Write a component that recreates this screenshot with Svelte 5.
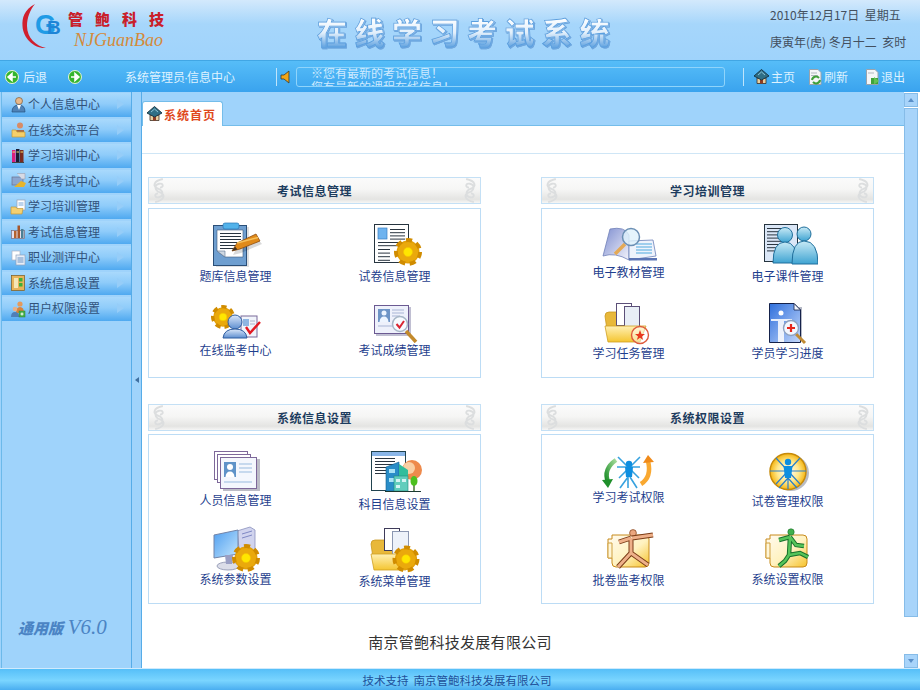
<script lang="ts">
  const menu = [
    { label: '个人信息中心', icon: 'm1' },
    { label: '在线交流平台', icon: 'm2' },
    { label: '学习培训中心', icon: 'm3' },
    { label: '在线考试中心', icon: 'm4' },
    { label: '学习培训管理', icon: 'm5' },
    { label: '考试信息管理', icon: 'm6' },
    { label: '职业测评中心', icon: 'm7' },
    { label: '系统信息设置', icon: 'm8' },
    { label: '用户权限设置', icon: 'm9' }
  ];

  // h = height of the icon slot, so each label lands where the artwork pushes it
  const panels = [
    {
      title: '考试信息管理',
      items: [
        { label: '题库信息管理', icon: 'tiku', h: 48 },
        { label: '试卷信息管理', icon: 'shijuan', h: 48 },
        { label: '在线监考中心', icon: 'jiankao', h: 44 },
        { label: '考试成绩管理', icon: 'chengji', h: 44 }
      ]
    },
    {
      title: '学习培训管理',
      items: [
        { label: '电子教材管理', icon: 'jiaocai', h: 44 },
        { label: '电子课件管理', icon: 'kejian', h: 48 },
        { label: '学习任务管理', icon: 'renwu', h: 47 },
        { label: '学员学习进度', icon: 'jindu', h: 47 }
      ]
    },
    {
      title: '系统信息设置',
      items: [
        { label: '人员信息管理', icon: 'renyuan', h: 46 },
        { label: '科目信息设置', icon: 'kemu', h: 50 },
        { label: '系统参数设置', icon: 'canshu', h: 47 },
        { label: '系统菜单管理', icon: 'caidan', h: 49 }
      ]
    },
    {
      title: '系统权限设置',
      items: [
        { label: '学习考试权限', icon: 'xuexi', h: 43 },
        { label: '试卷管理权限', icon: 'juanquan', h: 47 },
        { label: '批卷监考权限', icon: 'pijuan', h: 48 },
        { label: '系统设置权限', icon: 'shezhi', h: 47 }
      ]
    }
  ];
</script>

{#snippet gear(x, y, r)}
  <circle cx={x} cy={y} r={r * 0.82} fill="#e3a008" stroke="#d08c00" stroke-width={r * 0.36} stroke-dasharray={`${r * 0.42} ${r * 0.32}`} />
  <circle cx={x} cy={y} r={r * 0.72} fill="#eaa90c" />
  <circle cx={x} cy={y} r={r * 0.32} fill="#ffe600" stroke="#f5c400" stroke-width="0.6" />
{/snippet}

{#snippet lines(x, y, w, n, step, color = '#2a3540')}
  {#each Array(n) as _, i}
    <path d={`M${x} ${y + i * step + 0.5}H${x + w}`} stroke={color} stroke-width="1" />
  {/each}
{/snippet}

{#snippet folder(x, y)}
  <path d={`M${x} ${y + 28}L${x - 3} ${y + 7}Q${x - 3} ${y + 3} ${x + 1} ${y + 3}H${x + 10}L${x + 14} ${y + 7}H${x + 30}V${y + 30}H${x + 4}Z`} fill="#e8b83a" stroke="#c99820" stroke-width="0.8" />
{/snippet}

{#snippet folderFront(x, y)}
  <path d={`M${x + 2} ${y + 31}L${x - 1} ${y + 15}H${x + 40}L${x + 34} ${y + 31}Z`} fill="url(#gFolder)" stroke="#cf9f22" stroke-width="0.8" />
{/snippet}

{#snippet clipFolder(x)}
  <path d={`M${x} 14H${x + 4}V10H${x + 37}Q${x + 41} 10 ${x + 41} 14V38Q${x + 41} 42 ${x + 37} 42H${x + 8}Q${x + 4} 42 ${x + 4} 38V33H${x}Z`} fill="url(#gClip)" stroke="#c78a1a" />
  <path d={`M${x} 18H${x + 4}V33H${x}Z`} fill="#fff6d8" stroke="#cfa040" />
{/snippet}

{#snippet art(name)}
  {#if name === 'tiku'}
    <rect x="10" y="6" width="33" height="40" fill="#000" opacity=".12" />
    <rect x="7.500" y="4.500" width="33" height="40" fill="#6f9fd0" stroke="#2b4f78" />
    <path d="M11 9H37V36H19L11 30Z" fill="#fff" stroke="#3d5b7e" stroke-width=".6" />
    {@render lines(14, 12, 21, 6, 3)}
    <path d="M11 30L19 36L19 30Z" fill="#cfd8e2" stroke="#5b7290" stroke-width=".6" />
    <rect x="17" y="2" width="16" height="6" rx="2" fill="#52b2ea" stroke="#2a77b4" stroke-width=".7" />
    <path d="M26 31L30 23L50 14L55 20L34 29Z" fill="#000" opacity=".15" transform="translate(1 3)" />
    <path d="M26 30L31 22L50 13L54 20L34 28Z" fill="#e08a1a" stroke="#8e4d0e" stroke-width=".8" />
    <path d="M31 22L52 16.500" stroke="#f6c15a" stroke-width="1.400" />
    <path d="M26 30L29 25.500L31.500 28.600Z" fill="#45321f" />
  {:else if name === 'shijuan'}
    <rect x="9.500" y="3.500" width="34" height="38" fill="#fff" stroke="#26343f" />
    <rect x="13" y="7" width="9" height="11" fill="#6eb3ef" stroke="#3a7fc4" stroke-width=".7" />
    {@render lines(25, 8, 15, 4, 3.200)}
    {@render lines(13, 21, 27, 2, 3.200)}
    {@render lines(13, 28, 12, 4, 3.600)}
    {@render gear(43, 31, 14)}
  {:else if name === 'jiankao'}
    {@render gear(17, 18, 12)}
    <rect x="35" y="17" width="16" height="21" fill="#f1f4fb" stroke="#7a6a9a" />
    <rect x="37" y="20" width="6" height="7" fill="#8fb6e2" />
    <path d="M44 22H49M44 25H49" stroke="#aab6cc" />
    <circle cx="29" cy="23" r="7" fill="url(#gBlue)" stroke="#2f5da0" />
    <path d="M17 39Q18 30 29 30Q40 30 41 39Z" fill="url(#gBlue)" stroke="#2f5da0" />
    <path d="M40 28L44 34L54 23" fill="none" stroke="#e31b23" stroke-width="2.400" />
  {:else if name === 'chengji'}
    <rect x="11" y="8" width="35" height="29" fill="#c0bfd2" />
    <rect x="9.500" y="6.500" width="34" height="28" fill="#eef1fb" stroke="#6b5a92" />
    <rect x="13" y="10" width="12" height="13" fill="#6e94c6" />
    <circle cx="19" cy="14" r="2.500" fill="#eef5ff" />
    <path d="M14.500 23Q15 17.500 19 17.500Q23 17.500 23.500 23Z" fill="#eef5ff" />
    <path d="M27 11H39M27 14H39M27 17H35M13 27H32" stroke="#a9b5d5" />
    <path d="M41 32L51 43" stroke="#c38a2c" stroke-width="3.500" />
    <circle cx="35" cy="25" r="7.500" fill="#f7fbff" stroke="#a7b7c7" stroke-width="1.500" />
    <path d="M31.500 25L34.500 28.500L39 22" fill="none" stroke="#d92632" stroke-width="2" />
  {:else if name === 'jiaocai'}
    <path d="M4 35L11 8Q26 5 30 14L30 39Q16 31 4 35Z" fill="url(#gBook)" stroke="#7080b8" stroke-width=".8" />
    <path d="M30 39L30 20L54 19L57 35Z" fill="#eef3fc" stroke="#6b80b8" stroke-width=".8" />
    <path d="M30 37H58V39.500H30Z" fill="#5b74b4" />
    <path d="M37 23H53M37 26H53M37 29H53M37 32H53" stroke="#4fa9de" />
    <path d="M16 33L26 23" stroke="#e4a956" stroke-width="3.500" />
    <circle cx="32" cy="16" r="8.500" fill="#dff1fb" fill-opacity=".8" stroke="#6b8fb4" stroke-width="1.500" />
  {:else if name === 'kejian'}
    <rect x="6.500" y="3.500" width="33" height="37" fill="#dbe7f7" stroke="#26343f" />
    {@render lines(9, 7, 17, 8, 3.200)}
    <circle cx="27" cy="14" r="7.500" fill="url(#gAqua)" stroke="#206f9c" />
    <path d="M15 42Q15 21 27 21Q39 21 39 42Z" fill="url(#gAqua)" stroke="#206f9c" />
    <circle cx="46" cy="13" r="7" fill="url(#gAqua)" stroke="#206f9c" />
    <path d="M34 43Q34 20 46 20Q60 20 60 43Z" fill="url(#gAqua)" stroke="#206f9c" />
  {:else if name === 'renwu'}
    {@render folder(9, 10)}
    <rect x="17.500" y="4.500" width="15" height="22" fill="#fff" stroke="#5b4f78" />
    <rect x="25.500" y="7.500" width="15" height="24" fill="#e8eef6" stroke="#5b4f78" />
    {@render folderFront(7, 12)}
    <circle cx="41" cy="36" r="8.500" fill="#fff" fill-opacity=".5" stroke="#de5b3c" stroke-width="1.400" />
    <path d="M41 31L42.500 35H46L43 37.500L44.200 41L41 38.800L37.800 41L39 37.500L36 35H39.500Z" fill="#e8391e" />
  {:else if name === 'jindu'}
    <path d="M41 8V42H44V8Z" fill="#b6bac6" />
    <path d="M11.500 4.500H36L42.500 11V43.500H11.500Z" fill="url(#gDoc)" stroke="#15224a" />
    <path d="M36 4.500V11H42.500Z" fill="#f4f7fd" stroke="#15224a" stroke-width=".8" />
    <circle cx="23" cy="14" r="2.500" fill="#fff" />
    <path d="M13 20H34V22H26V43H20V22H13Z" fill="#fff" fill-opacity=".85" />
    <path d="M38 35L47 44" stroke="#c18b34" stroke-width="3" />
    <circle cx="33" cy="29" r="7.500" fill="#f2f7ff" stroke="#8ea2c0" stroke-width="1.400" />
    <path d="M33 25V33M29 29H37" stroke="#e5261c" stroke-width="2.200" />
  {:else if name === 'renyuan'}
    <rect x="8.500" y="4.500" width="33" height="28" fill="#fff" stroke="#7e689a" />
    <rect x="11.500" y="7.500" width="33" height="28" fill="#fff" stroke="#7e689a" />
    <rect x="17" y="12" width="37" height="32" fill="#bcbcc6" />
    <rect x="14.500" y="10.500" width="36" height="31" fill="#f4f7fd" stroke="#7e689a" />
    <rect x="18" y="15" width="12" height="15" fill="#5f93c8" />
    <circle cx="24" cy="20" r="3" fill="#fff" />
    <path d="M19.500 30Q20 24.500 24 24.500Q28 24.500 28.500 30Z" fill="#fff" />
    <path d="M33 17H46M33 21H46M33 25H46M18 35H46" stroke="#99bbdf" />
  {:else if name === 'kemu'}
    <rect x="6.500" y="4.500" width="34" height="39" fill="#fff" stroke="#21434f" />
    <rect x="7" y="5" width="33" height="4" fill="#8ab6e8" />
    {@render lines(10, 11, 20, 6, 3)}
    <circle cx="47" cy="23" r="10" fill="#ee8a4c" />
    <circle cx="44" cy="21" r="6" fill="#f9cfa4" />
    <path d="M21 44V20L34 15V44Z" fill="#2a8dc8" stroke="#125e8d" stroke-width=".6" />
    <path d="M24 22H30V26H24ZM24 31H30V35H24Z" fill="#a8e2f6" />
    <path d="M34 44V17L43 23V44Z" fill="#31bd9c" />
    <rect x="29" y="29" width="14" height="15" fill="#62cdbd" stroke="#208a7d" stroke-width=".6" />
    <path d="M31 32H35V35H31ZM37 32H41V35H37ZM31 38H35V41H31Z" fill="#d6f4f3" />
    <path d="M49 44V36" stroke="#3d6b2a" stroke-width="1.400" />
    <ellipse cx="49" cy="34" rx="3.500" ry="5" fill="#4cc01f" />
    <path d="M20 44.500H56" stroke="#1b3a33" />
  {:else if name === 'canshu'}
    <path d="M31 6L44 2L49 5V28L34 32Z" fill="#d1d4ee" stroke="#8a90bc" stroke-width=".8" />
    <path d="M36 9L46 6M36 13L46 10" stroke="#7f88c4" />
    <path d="M8 10L32 5V29L8 33Z" fill="url(#gScreen)" stroke="#7384a8" />
    <ellipse cx="22" cy="41" rx="11" ry="4" fill="#dbdde8" stroke="#9ca2bb" />
    <path d="M19 30H27L26 39H20Z" fill="#9a9fc4" />
    {@render gear(40, 33, 14)}
  {:else if name === 'caidan'}
    {@render folder(9, 12)}
    <rect x="19.500" y="3.500" width="15" height="22" fill="#fff" stroke="#3e3b5a" />
    <rect x="27.500" y="6.500" width="16" height="24" fill="#edf2fa" stroke="#8b97b2" />
    {@render folderFront(7, 14)}
    {@render gear(41, 34, 13.500)}
  {:else if name === 'xuexi'}
    <g stroke="#37a2df" stroke-width="1.600" fill="none">
      <path d="M19 10L40 31M41 10L20 31M29 19V41M29 30L21 41M31 30L38 41M18 20H41" />
    </g>
    <circle cx="30" cy="17" r="3.200" fill="#0d8ee0" />
    <path d="M26 20H34L33 30H27Z" fill="#0d8ee0" />
    <path d="M17 13Q4 22 9 35" fill="none" stroke="url(#gGreen)" stroke-width="4.500" />
    <path d="M3 33L14 32L9 41Z" fill="#1f8f2a" />
    <path d="M42 37Q53 30 49 14" fill="none" stroke="#f9a830" stroke-width="4.500" />
    <path d="M44 16L49 8L55 15Z" fill="#f08a1a" />
  {:else if name === 'juanquan'}
    <circle cx="33" cy="26" r="18" fill="#b9bcc4" />
    <circle cx="30" cy="24.500" r="18" fill="url(#gSun)" stroke="#c68a0a" stroke-width="1.500" />
    <path d="M18 11L42 37M42 11L18 37M12 24H48M30 20V42M30 31L21 41M30 31L39 41" stroke="#2a7fc9" stroke-width="1.200" />
    <circle cx="30" cy="15" r="3.200" fill="#0d8ee0" />
    <path d="M25.500 19H34.500L33 31H27Z" fill="#0d8ee0" />
  {:else if name === 'pijuan'}
    {@render clipFolder(9)}
    <circle cx="34" cy="8" r="3.400" fill="#eba67e" stroke="#7c3d18" stroke-width=".7" />
    <path d="M32 13L20 17M33 13L54 10M32 13L32 28L19 42M32 28L49 40" fill="none" stroke="#7c3d18" stroke-width="5" />
    <path d="M32 13L20 17M33 13L54 10M32 13L32 28L19 42M32 28L49 40" fill="none" stroke="#eeb089" stroke-width="3" />
  {:else if name === 'shezhi'}
    {@render clipFolder(8)}
    <circle cx="33" cy="7" r="3.200" fill="#3fb04c" stroke="#176b23" stroke-width=".6" />
    <path d="M32 12L21 15M32 12L38 20L46 21M32 12L31 30L42 28L50 32M31 30L27 36L21 41" fill="none" stroke="#17702a" stroke-width="4.500" />
    <path d="M32 12L21 15M32 12L38 20L46 21M32 12L31 30L42 28L50 32M31 30L27 36L21 41" fill="none" stroke="#56c45a" stroke-width="2.500" />
  {/if}
{/snippet}

{#snippet mini(name)}
  <svg class="mini" width="18" height="18" viewBox="0 0 18 18" aria-hidden="true">
    {#if name === 'm1'}
      <circle cx="10" cy="5" r="3.500" fill="#eab98a" stroke="#7b5a3a" stroke-width=".7" />
      <path d="M3 16Q3 9 10 9Q16 9 16 16Z" fill="#4f83b8" stroke="#24507f" stroke-width=".7" />
      <path d="M8 9L10 14L12 9Z" fill="#fff" />
    {:else if name === 'm2'}
      <circle cx="11" cy="4.500" r="3" fill="#d88c66" />
      <path d="M7 9H15V11H7Z" fill="#a66a4a" />
      <path d="M3 9H7L8 11H16V16H3Z" fill="#f5cf6a" stroke="#c09a36" stroke-width=".7" />
    {:else if name === 'm3'}
      <rect x="3" y="3" width="3.500" height="12" fill="#d91f7e" />
      <rect x="7" y="2" width="3.500" height="13" fill="#1a1a33" />
      <rect x="11" y="3" width="3.500" height="12" fill="#7a2a1e" />
      <path d="M3.500 5H6M7.500 5H10M11.500 5H14" stroke="#f2e26a" />
      <path d="M3 15.500H15" stroke="#444" />
    {:else if name === 'm4'}
      <rect x="3" y="5" width="11" height="8" fill="#8ba6d0" stroke="#6b6f8a" stroke-width=".7" />
      <path d="M5 15H15L17 11L12 9Z" fill="#e7b52c" />
      <path d="M8 1.500H16V7H13" fill="#d8dbe5" stroke="#9a9fb0" stroke-width=".6" />
    {:else if name === 'm5'}
      <rect x="8" y="2" width="8" height="10" fill="#fff" stroke="#9a9fb0" stroke-width=".7" />
      <path d="M9.500 5H14.500M9.500 7H14.500" stroke="#7ba7d8" />
      <path d="M2 9H7L8 10.500H14L13 16H2Z" fill="#f4d071" stroke="#c19a3b" stroke-width=".7" />
    {:else if name === 'm6'}
      <rect x="2.500" y="7.500" width="13" height="8" fill="#e6e0ea" stroke="#7a6a78" stroke-width=".7" />
      <rect x="5" y="8" width="2.500" height="7" fill="#b5622e" />
      <rect x="8.500" y="2.500" width="2.500" height="12.500" fill="#a7562a" />
      <rect x="12" y="6" width="2.500" height="9" fill="#4b7f96" />
    {:else if name === 'm7'}
      <rect x="3" y="2" width="8" height="9" fill="#fff" stroke="#a7b0c4" stroke-width=".7" />
      <rect x="7" y="6" width="9" height="10" fill="#e8eef7" stroke="#8ea0bc" stroke-width=".7" />
      <path d="M8.500 9H14.500M8.500 11H14.500M8.500 13H14.500" stroke="#6a93c4" />
    {:else if name === 'm8'}
      <rect x="2.500" y="1.500" width="13" height="15" fill="#e8b45a" stroke="#7a5a20" stroke-width=".7" />
      <rect x="5" y="4" width="4" height="10" fill="#f6e6b6" />
      <rect x="10" y="4" width="3.500" height="3.500" fill="#3fae38" />
      <rect x="10" y="9" width="3.500" height="3.500" fill="#3fae38" />
    {:else if name === 'm9'}
      <circle cx="11" cy="4" r="2.600" fill="#e49a5c" />
      <path d="M7 13Q7 7 11 7Q15 7 15 13Z" fill="#d8843c" />
      <circle cx="6" cy="9" r="2.300" fill="#e8b088" />
      <path d="M2 17Q2 12 6 12Q10 12 10 17Z" fill="#4f7fb8" />
      <rect x="10" y="11" width="6" height="6" fill="#46b04a" stroke="#2b8030" stroke-width=".5" />
      <path d="M13 12.500V15.500M11.500 14H14.500" stroke="#fff" />
    {:else if name === 'home'}
      <path d="M4 10V15.500H13V10Z" fill="#e8cf9f" stroke="#3c2f24" stroke-width=".8" />
      <rect x="7" y="11.500" width="3" height="4" fill="#8f3b23" />
      <path d="M1 8L8.500 1.500L16 8L8.500 12Z" fill="#2f6f86" stroke="#142f3c" stroke-width=".9" />
      <path d="M5 7L8.500 4L12 7" fill="none" stroke="#8cc2d4" />
    {:else if name === 'refresh'}
      <path d="M3.500 1.500H12L15 4.500V16.500H3.500Z" fill="#f4f6f8" stroke="#9aa3ac" />
      <path d="M5 5H11M5 7.500H12" stroke="#b0b7be" />
      <path d="M6 12A4 4 0 0 1 13 10M14 12A4 4 0 0 1 7 14" fill="none" stroke="#3f9f3a" stroke-width="2" />
    {:else if name === 'quit'}
      <path d="M3.500 1.500H12L15 4.500V16.500H3.500Z" fill="#f4f6f8" stroke="#9aa3ac" />
      <path d="M5 5H11" stroke="#b0b7be" />
      <rect x="8" y="10" width="7" height="6" fill="#3fa43a" />
      <path d="M11 9L16 13L11 16.500Z" fill="#63c256" />
    {/if}
  </svg>
{/snippet}

{#snippet swirl()}
  <svg class="swirl" width="16" height="25" viewBox="0 0 16 26" aria-hidden="true">
    <path d="M12 1C2 3 1 9 7 11C13 13 13 19 8 20C3 21 3 16 7 16M4 25C14 23 15 17 9 15C3 13 3 7 8 6C13 5 13 10 9 10" fill="none" stroke="#dcdedf" stroke-width="2" />
  </svg>
{/snippet}

<svg class="defs" width="0" height="0" aria-hidden="true">
  <defs>
    <linearGradient id="gBlue" x1="0" y1="0" x2="0" y2="1"><stop offset="0" stop-color="#dce8fa" /><stop offset="1" stop-color="#5d8ed0" /></linearGradient>
    <linearGradient id="gAqua" x1="0" y1="0" x2="0" y2="1"><stop offset="0" stop-color="#c8eaf6" /><stop offset="1" stop-color="#3fa4d2" /></linearGradient>
    <linearGradient id="gBook" x1="0" y1="0" x2="1" y2="1"><stop offset="0" stop-color="#7e8ed0" /><stop offset="1" stop-color="#f3f3fb" /></linearGradient>
    <linearGradient id="gFolder" x1="0" y1="0" x2="0" y2="1"><stop offset="0" stop-color="#fff0b4" /><stop offset="1" stop-color="#f4c530" /></linearGradient>
    <linearGradient id="gDoc" x1="0" y1="0" x2="1" y2="1"><stop offset="0" stop-color="#2e6fdc" /><stop offset="1" stop-color="#c4d8fb" /></linearGradient>
    <linearGradient id="gScreen" x1="0" y1="0" x2="1" y2="1"><stop offset="0" stop-color="#4e9ef0" /><stop offset="1" stop-color="#c4e6fd" /></linearGradient>
    <linearGradient id="gGreen" x1="1" y1="0" x2="0" y2="1"><stop offset="0" stop-color="#a5dc9c" /><stop offset="1" stop-color="#1f8f2a" /></linearGradient>
    <radialGradient id="gSun"><stop offset="0" stop-color="#fff" /><stop offset=".6" stop-color="#ffe88c" /><stop offset="1" stop-color="#f5b512" /></radialGradient>
    <linearGradient id="gClip" x1="0" y1="0" x2="1" y2="1"><stop offset="0" stop-color="#fffaf0" /><stop offset=".55" stop-color="#fff2c0" /><stop offset="1" stop-color="#f6c22a" /></linearGradient>
  </defs>
</svg>

<div class="app">
  <header class="top">
    <div class="logo">
      <div class="crescent">
        <svg width="46" height="52" viewBox="22 0 46 52" aria-hidden="true">
          <path d="M35 4C24 10 22 18 22.500 26C23 38 34 49 46 48C36 46 27 38 27 26C27 18 30 10 35 4Z" fill="#d01f2e" />
        </svg>
        <span class="gb"><b>G</b><b class="b2">B</b></span>
      </div>
      <div class="brand">
        <div class="brand-cn">管鲍科技</div>
        <div class="brand-en">NJGuanBao</div>
      </div>
    </div>
    <div class="sys-title">在线学习考试系统</div>
    <div class="dates">
      <div>2010年12月17日&nbsp;&nbsp;星期五</div>
      <div>庚寅年(虎) 冬月十二&nbsp;&nbsp;亥时</div>
    </div>
  </header>

  <nav class="toolbar">
    <div class="nav-group">
      <svg width="14" height="14" viewBox="0 0 14 14" aria-hidden="true"><circle cx="7" cy="7" r="6.500" fill="#35b52e" stroke="#e8f4d8" /><path d="M11 7H6M7 3.500L3 7L7 10.500Z" fill="#fff" stroke="#fff" stroke-width="1.500" /></svg>
      <span>后退</span>
    </div>
    <svg class="forward" width="14" height="14" viewBox="0 0 14 14" aria-hidden="true"><circle cx="7" cy="7" r="6.500" fill="#35b52e" stroke="#e8f4d8" /><path d="M3 7H8M7 3.500L11 7L7 10.500Z" fill="#fff" stroke="#fff" stroke-width="1.500" /></svg>
    <span class="who">系统管理员<span class="dot">·</span>信息中心</span>
    <span class="sep"></span>
    <svg class="speaker" width="12" height="14" viewBox="0 0 12 14" aria-hidden="true"><path d="M1 5H4L9 1V13L4 9H1Z" fill="#f2a515" stroke="#3d3a2c" stroke-width=".8" /></svg>
    <div class="notice">
      <p>※您有最新的考试信息！</p>
      <p>您有最新的课程在线信息！</p>
    </div>
    <span class="sep second"></span>
    <div class="tool-links">
      <span>{@render mini('home')}主页</span>
      <span>{@render mini('refresh')}刷新</span>
      <span>{@render mini('quit')}退出</span>
    </div>
  </nav>

  <div class="body">
    <aside class="side">
      <ul class="menu">
        {#each menu as m}
          <li>
            {@render mini(m.icon)}
            <span>{m.label}</span>
            <i class="arrow"></i>
          </li>
        {/each}
      </ul>
      <div class="edition"><b>通用版</b> <em>V6.0</em></div>
    </aside>

    <div class="splitter"><span class="toggle"></span></div>

    <main class="main">
      <div class="content">
        <div class="tabs">
          <div class="tab">{@render mini('home')}<span>系统首页</span></div>
        </div>
        <div class="subbar"></div>
        <div class="panels">
          {#each panels as p}
            <section class="panel">
              <h2>{@render swirl()}<span>{p.title}</span>{@render swirl()}</h2>
              <div class="grid">
                {#each p.items as it}
                  <a class="cell" href="#top">
                    <svg width="60" height={it.h} viewBox={`0 0 60 ${it.h}`} aria-hidden="true">{@render art(it.icon)}</svg>
                    <span>{it.label}</span>
                  </a>
                {/each}
              </div>
            </section>
          {/each}
        </div>
        <p class="company">南京管鲍科技发展有限公司</p>
      </div>
      <div class="scroll">
        <span class="sb-btn up"></span>
        <span class="thumb"></span>
        <span class="track"></span>
        <span class="sb-btn down"></span>
      </div>
    </main>
  </div>

  <footer class="foot">技术支持&nbsp;&nbsp;南京管鲍科技发展有限公司</footer>
</div>

<style>
  :global(body) {
    margin: 0;
    background: #fff;
  }

  .defs { position: absolute; }

  .app {
    width: 920px;
    height: 690px;
    display: flex;
    flex-direction: column;
    overflow: hidden;
    font-family: "Noto Sans CJK SC", "Liberation Sans", sans-serif;
    font-size: 12px;
  }

  /* header */
  .top {
    height: 60px;
    flex: none;
    display: flex;
    background: linear-gradient(#d3e9fc 0, #a6d6fb 24px, #9fd3fb 100%);
    position: relative;
  }

  .logo {
    width: 317px;
    flex: none;
    display: flex;
    padding-left: 22px;
    box-sizing: border-box;
  }

  .crescent {
    width: 46px;
    height: 52px;
    position: relative;
  }

  .crescent svg { display: block; }

  .gb {
    position: absolute;
    left: 13px;
    top: 10px;
    font-family: "Liberation Sans", sans-serif;
    font-size: 27px;
    line-height: 30px;
    color: #1f9be6;
    white-space: nowrap;
  }

  .gb b { font-weight: 700; }
  .gb .b2 { font-size: 19px; margin-left: -9px; color: #1e84d6; }

  .brand-cn {
    margin-top: 9px;
    font-size: 15px;
    line-height: 20px;
    font-weight: 900;
    letter-spacing: 12px;
    color: #c9202a;
    white-space: nowrap;
  }

  .brand-en {
    margin: 1px 0 0 6px;
    font-family: "Liberation Serif", serif;
    font-style: italic;
    font-size: 18px;
    line-height: 20px;
    color: #d48a3c;
    white-space: nowrap;
  }

  .sys-title {
    margin-top: 12px;
    font-size: 30px;
    line-height: 38px;
    height: 38px;
    font-weight: 900;
    letter-spacing: 7.500px;
    white-space: nowrap;
    color: transparent;
    background: linear-gradient(#fbfdff 20%, #e2effb 55%, #6aa8e2 90%);
    -webkit-background-clip: text;
    background-clip: text;
    -webkit-text-stroke: 0.8px #5b9fdf;
    filter: drop-shadow(1px 1px 0 #6ea6de);
  }

  .dates {
    position: absolute;
    left: 770px;
    top: 1px;
    color: #43505f;
    line-height: 27px;
    white-space: nowrap;
  }

  /* toolbar */
  .toolbar {
    height: 32px;
    flex: none;
    box-sizing: border-box;
    border-top: 1px solid #41a6e4;
    display: flex;
    align-items: center;
    background: linear-gradient(#56bdf8, #3aa3ee);
    color: #dff2ff;
    white-space: nowrap;
  }

  .nav-group {
    display: flex;
    align-items: center;
    gap: 4px;
    margin-left: 5px;
  }

  .forward { margin-left: 21px; }
  .who { margin-left: 43px; width: 151px; flex: none; }

  .dot {
    font-family: "Liberation Sans", sans-serif;
    margin: 0 -1px;
  }

  .sep {
    width: 1px;
    height: 18px;
    background: #bfe4fb;
    flex: none;
  }

  .speaker { margin-left: 3px; }

  .notice {
    margin-left: 4px;
    width: 431px;
    height: 20px;
    box-sizing: border-box;
    border: 1px solid #8fd4fb;
    border-radius: 3px;
    overflow: hidden;
    padding-left: 14px;
    line-height: 14px;
    color: #cfeaff;
  }

  .notice p { margin: 0; }
  .notice p:first-child { margin-top: -2px; }

  .second { margin-left: 18px; }

  .tool-links {
    display: flex;
    margin-left: 9px;
  }

  .tool-links span {
    display: flex;
    align-items: center;
    width: 57px;
    flex: none;
  }

  .tool-links span:first-child { width: 53px; }

  /* body */
  .body {
    flex: 1;
    min-height: 0;
    display: flex;
    background: #9fd3fb;
  }

  .side {
    width: 129px;
    flex: none;
    margin-left: 1px;
    border-left: 1px solid #6cb9ea;
    border-right: 1px solid #56ace8;
    display: flex;
    flex-direction: column;
  }

  .menu {
    list-style: none;
    margin: 1px 0 0;
    padding: 0;
    display: flex;
    flex-direction: column;
    gap: 2px;
  }

  .menu li {
    height: 23.500px;
    display: flex;
    align-items: center;
    gap: 1px;
    padding-left: 7px;
    background: linear-gradient(#a9d9fc, #8fccfa 45%, #4fa9f0);
    color: #31527a;
    position: relative;
  }

  .menu li > span { margin-bottom: 2px; }

  .arrow {
    position: absolute;
    right: 7px;
    top: 6px;
    width: 0;
    height: 0;
    border-left: 7px solid #96cdf8;
    border-top: 5px solid transparent;
    border-bottom: 5px solid transparent;
  }

  .edition {
    margin-top: auto;
    margin-bottom: 28px;
    padding-left: 16px;
    color: #4b84c4;
    white-space: nowrap;
    line-height: 22px;
  }

  .edition b {
    font-size: 15px;
    font-style: italic;
    font-weight: 900;
  }

  .edition em {
    font-family: "Liberation Serif", serif;
    font-size: 21px;
    margin-left: 2px;
  }

  .splitter {
    width: 9px;
    flex: none;
    display: flex;
    align-items: center;
    justify-content: center;
    border-right: 1px solid #56ace8;
  }

  .toggle {
    width: 0;
    height: 0;
    border-right: 4px solid #3f6fa0;
    border-top: 3px solid transparent;
    border-bottom: 3px solid transparent;
  }

  .main {
    flex: 1;
    min-width: 0;
    display: flex;
    background: #fff;
  }

  .content {
    width: 762px;
    flex: none;
  }

  .tabs {
    height: 34px;
    box-sizing: border-box;
    background: #9fd3fb;
    border-bottom: 1px solid #74bdea;
    padding-top: 9px;
  }

  .tab {
    width: 81px;
    height: 25px;
    box-sizing: border-box;
    background: #fff;
    border: 1px solid #74bdea;
    border-bottom: none;
    border-radius: 3px 3px 0 0;
    display: flex;
    align-items: center;
    padding-left: 3px;
    font-weight: 700;
    color: #e0491d;
    letter-spacing: 1px;
  }

  .subbar {
    height: 27px;
    border-bottom: 1px solid #cfe6f6;
  }

  .panels {
    display: grid;
    grid-template-columns: 333px 333px;
    column-gap: 60px;
    row-gap: 26px;
    padding: 23px 0 0 6px;
  }

  .panel h2 {
    margin: 0;
    height: 27px;
    box-sizing: border-box;
    border: 1px solid #c4e0f5;
    display: flex;
    justify-content: space-between;
    align-items: center;
    padding: 0 2px;
    background: linear-gradient(#fbfbfb, #f6f6f5 45%, #e4e4e2 85%, #f6f6f5);
    font-size: 12px;
    font-weight: 700;
    letter-spacing: 0.500px;
    color: #1d3c5e;
  }

  .swirl { flex: none; }
  .panel h2 .swirl:last-child { transform: scaleX(-1); }

  .grid {
    margin-top: 4px;
    height: 170px;
    box-sizing: border-box;
    border: 1px solid #bcdcf5;
    padding: 12px 7px 0;
    display: grid;
    grid-template-columns: 159px 159px;
    grid-template-rows: 78px 78px;
  }

  .panel:nth-child(n + 3) .grid { margin-top: 3px; }

  .cell {
    display: flex;
    flex-direction: column;
    align-items: center;
    text-decoration: none;
    color: #1f3f8e;
    line-height: 14px;
  }

  .cell svg { flex: none; }

  .company {
    margin: 27px 0 0;
    text-align: center;
    font-size: 15px;
    letter-spacing: 0.300px;
    line-height: 22px;
    color: #333;
    padding-right: 126px;
  }

  .scroll {
    width: 14px;
    flex: none;
    display: flex;
    flex-direction: column;
    padding-top: 1px;
    box-sizing: border-box;
  }

  .sb-btn {
    height: 14px;
    flex: none;
    box-sizing: border-box;
    background: #a8d4fa;
    border: 1px solid #86bce8;
    position: relative;
  }

  .sb-btn::after {
    content: "";
    position: absolute;
    left: 3px;
    width: 0;
    height: 0;
    border-left: 3px solid transparent;
    border-right: 3px solid transparent;
  }

  .up::after { top: 4px; border-bottom: 4px solid #5a8fc8; }
  .down::after { top: 4px; border-top: 4px solid #5a8fc8; }

  .thumb {
    height: 509px;
    margin-top: 1px;
    flex: none;
    box-sizing: border-box;
    background: #a8d4fa;
    border: 1px solid #86bce8;
  }

  .track { flex: 1; }

  .foot {
    height: 22px;
    flex: none;
    box-sizing: border-box;
    border-top: 1px solid #cfeafd;
    background: linear-gradient(#56bff8, #7ad5ff 55%, #4aaef0);
    text-align: center;
    font-size: 11.500px;
    line-height: 23px;
    color: #20509a;
    padding-right: 6px;
  }
</style>
